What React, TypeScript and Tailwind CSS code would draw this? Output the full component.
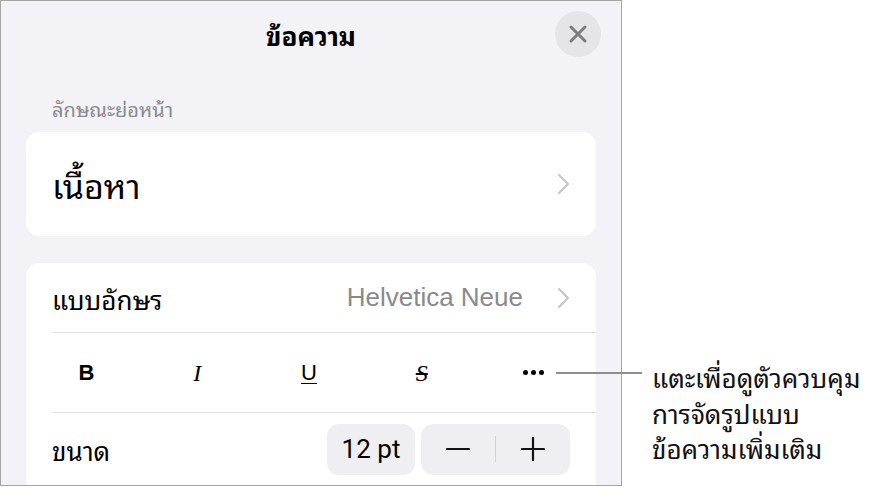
import React from 'react';

const thai = { fontFamily: '"Noto Sans Thai Looped", "Noto Sans Thai", "Noto Sans", Roboto, sans-serif' };

function Chevron() {
  return (
    <svg width="14" height="24" viewBox="0 0 14 24" fill="none">
      <path d="M3 3l9 9-9 9" stroke="#c4c4c7" strokeWidth="2" strokeLinecap="round" strokeLinejoin="round" />
    </svg>
  );
}

export default function App() {
  return (
    <div className="relative w-[880px] h-[497px] bg-white flex overflow-hidden" style={thai}>
      {/* Panel */}
      <div className="w-[622px] h-[486px] shrink-0 bg-[#f2f2f7] border border-[#a5a5a5] overflow-hidden flex flex-col">
        {/* Header */}
        <div className="h-[66px] shrink-0 flex items-center justify-between px-[20px]">
          <div className="w-[46px]" />
          <div className="text-[26px] leading-[34px] font-bold text-black">ข้อความ</div>
          <button className="w-[46px] h-[46px] rounded-full bg-[#e4e4e9] flex items-center justify-center">
            <svg width="20" height="20" viewBox="0 0 20 20">
              <path d="M3 3l14 14M17 3L3 17" stroke="#7c7c80" strokeWidth="3" strokeLinecap="round" />
            </svg>
          </button>
        </div>

        <div className="mt-[28px] pl-[51px] text-[20px] leading-[26px] text-[#8a8a8e]">ลักษณะย่อหน้า</div>

        {/* Paragraph style card */}
        <div className="mt-[11px] mx-[25px] h-[104px] shrink-0 rounded-[14px] bg-white flex items-center justify-between pl-[26px] pr-[26px]">
          <span className="text-[34px] leading-[44px] text-black">เนื้อหา</span>
          <Chevron />
        </div>

        {/* Font card */}
        <div className="mt-[27px] mx-[25px] rounded-t-[14px] bg-white flex flex-col pl-[26px] grow">
          <div className="h-[70px] shrink-0 flex items-center justify-between pr-[26px] border-b border-[#e0e0e3]">
            <span className="text-[26px] leading-[36px] text-black">แบบอักษร</span>
            <div className="flex items-center gap-[33px]">
              <span className="text-[26px] text-[#8a8a8e]" style={{ fontFamily: '"Liberation Sans", Arial, sans-serif' }}>
                Helvetica Neue
              </span>
              <Chevron />
            </div>
          </div>

          <div
            className="h-[80px] shrink-0 grid grid-cols-5 items-center border-b border-[#e0e0e3] text-[22px] text-black"
            style={{ fontFamily: '"Liberation Sans", Arial, sans-serif' }}
          >
            <span className="text-center font-bold -ml-[40px]">B</span>
            <span className="text-center italic -ml-[36px] text-[24px]" style={{ fontFamily: '"Liberation Serif", serif' }}>I</span>
            <span className="text-center underline underline-offset-[3px] decoration-1 -ml-[30px]">U</span>
            <span className="text-center line-through italic -ml-[22px] text-[24px]" style={{ fontFamily: '"Liberation Serif", serif' }}>S</span>
            <span className="flex justify-center gap-[3px] -ml-[16px]">
              <span className="w-[5px] h-[5px] rounded-full bg-black" />
              <span className="w-[5px] h-[5px] rounded-full bg-black" />
              <span className="w-[5px] h-[5px] rounded-full bg-black" />
            </span>
          </div>

          <div className="h-[72px] shrink-0 flex items-center justify-between pr-[26px]">
            <span className="text-[26px] leading-[34px] text-black">ขนาด</span>
            <div className="flex items-center gap-[6px]">
              <div
                className="w-[88px] h-[51px] rounded-[12px] bg-[#efeff1] flex items-center justify-center text-[26px] text-black"
                style={{ fontFamily: 'Roboto, "Liberation Sans", sans-serif' }}
              >
                12 pt
              </div>
              <div className="w-[149px] h-[51px] rounded-[12px] bg-[#efeff1] flex items-center">
                <div className="flex-1 flex items-center justify-center">
                  <svg width="24" height="4" viewBox="0 0 24 4">
                    <path d="M1 2h22" stroke="#111" strokeWidth="2.2" strokeLinecap="round" />
                  </svg>
                </div>
                <div className="w-px h-[26px] bg-[#d2d2d6]" />
                <div className="flex-1 flex items-center justify-center">
                  <svg width="24" height="24" viewBox="0 0 24 24">
                    <path d="M1 12h22M12 1v22" stroke="#111" strokeWidth="2.2" strokeLinecap="round" />
                  </svg>
                </div>
              </div>
            </div>
          </div>
        </div>
      </div>

      {/* Callout */}
      <div className="pl-[30px] pt-[359px] text-[26px] leading-[35.5px] text-[#111] whitespace-nowrap">
        <div>แตะเพื่อดูตัวควบคุม</div>
        <div>การจัดรูปแบบ</div>
        <div>ข้อความเพิ่มเติม</div>
      </div>
      <div className="absolute left-[556px] top-[372px] w-[86px] h-[2px] bg-[#8e8e8e]" />
    </div>
  );
}
